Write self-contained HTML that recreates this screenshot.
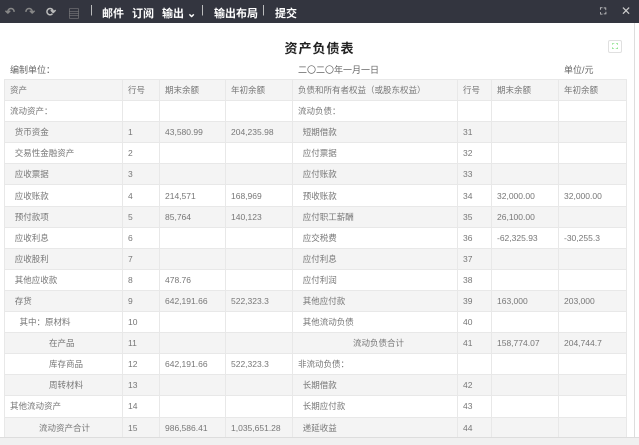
<!DOCTYPE html>
<html><head><meta charset="utf-8"><style>
*{margin:0;padding:0;box-sizing:border-box}
body{width:639px;height:445px;overflow:hidden;background:#fff;font-family:"Liberation Sans","Noto Sans CJK SC",sans-serif;color:#555;position:relative}
.tb{position:absolute;left:0;top:0;width:639px;height:23px;background:#33353f;color:#fff;font-size:11px;font-weight:bold}
.tb span{position:absolute;top:5px}
.tb .sep{color:#ccc;font-weight:normal;top:4px}
.ic{position:absolute;color:#888;font-size:12px;top:4px}
.title{position:absolute;top:38px;left:0;width:639px;text-align:center;font-size:13px;font-weight:bold;color:#222;letter-spacing:1px}
.meta{position:absolute;top:63px;font-size:9px;color:#666}
table{position:absolute;left:4px;top:79px;border-collapse:collapse;font-size:8.5px;table-layout:fixed}
td{height:21.1px;border:1px solid #e8e8e8;padding:0 5px;white-space:nowrap;overflow:hidden;color:#777}
tr.g td{background:#f4f4f4}
.r{position:absolute;left:634px;top:23px;width:1px;height:420px;background:#ddd}
.bot{position:absolute;left:0;top:437px;width:639px;height:8px;background:#f0f0f0;border-top:1px solid #ddd}
</style></head><body>
<div class="tb">
<span class="ic" style="left:5px">↶</span><span class="ic" style="left:25px">↷</span><span class="ic" style="left:46px;color:#bbb">⟳</span><span class="ic" style="left:68px">▤</span>
<span class="sep" style="left:90px">|</span>
<span style="left:102px">邮件</span><span style="left:132px">订阅</span><span style="left:162px">输出 ⌄</span>
<span class="sep" style="left:201px">|</span>
<span style="left:214px">输出布局</span>
<span class="sep" style="left:262px">|</span>
<span style="left:275px">提交</span>
<span style="left:600px;font-size:9px;color:#ccc;top:6px">⛶</span><span style="left:621px;font-weight:normal;color:#ccc;font-size:12px;top:4px">✕</span>
</div>
<div class="title">资产负债表</div>
<div style="position:absolute;left:608px;top:40px;width:14px;height:13px;border:1px solid #e0e0e0;border-radius:2px;color:#3c3;font-size:8px;text-align:center;line-height:11px">⛶</div>
<div class="meta" style="left:10px">编制单位：</div>
<div class="meta" style="left:298px">二〇二〇年一月一日</div>
<div class="meta" style="left:564px">单位/元</div>
<table>
<colgroup><col style="width:118px"><col style="width:37px"><col style="width:66px"><col style="width:67px"><col style="width:165px"><col style="width:34px"><col style="width:67px"><col style="width:68px"></colgroup>
<tr class="g"><td>资产</td><td>行号</td><td>期末余额</td><td>年初余额</td><td>负债和所有者权益（或股东权益）</td><td>行号</td><td>期末余额</td><td>年初余额</td></tr>
<tr><td>流动资产：</td><td></td><td></td><td></td><td>流动负债：</td><td></td><td></td><td></td></tr>
<tr class="g"><td>&nbsp;&nbsp;货币资金</td><td>1</td><td>43,580.99</td><td>204,235.98</td><td>&nbsp;&nbsp;短期借款</td><td>31</td><td></td><td></td></tr>
<tr><td>&nbsp;&nbsp;交易性金融资产</td><td>2</td><td></td><td></td><td>&nbsp;&nbsp;应付票据</td><td>32</td><td></td><td></td></tr>
<tr class="g"><td>&nbsp;&nbsp;应收票据</td><td>3</td><td></td><td></td><td>&nbsp;&nbsp;应付账款</td><td>33</td><td></td><td></td></tr>
<tr><td>&nbsp;&nbsp;应收账款</td><td>4</td><td>214,571</td><td>168,969</td><td>&nbsp;&nbsp;预收账款</td><td>34</td><td>32,000.00</td><td>32,000.00</td></tr>
<tr class="g"><td>&nbsp;&nbsp;预付款项</td><td>5</td><td>85,764</td><td>140,123</td><td>&nbsp;&nbsp;应付职工薪酬</td><td>35</td><td>26,100.00</td><td></td></tr>
<tr><td>&nbsp;&nbsp;应收利息</td><td>6</td><td></td><td></td><td>&nbsp;&nbsp;应交税费</td><td>36</td><td>-62,325.93</td><td>-30,255.3</td></tr>
<tr class="g"><td>&nbsp;&nbsp;应收股利</td><td>7</td><td></td><td></td><td>&nbsp;&nbsp;应付利息</td><td>37</td><td></td><td></td></tr>
<tr><td>&nbsp;&nbsp;其他应收款</td><td>8</td><td>478.76</td><td></td><td>&nbsp;&nbsp;应付利润</td><td>38</td><td></td><td></td></tr>
<tr class="g"><td>&nbsp;&nbsp;存货</td><td>9</td><td>642,191.66</td><td>522,323.3</td><td>&nbsp;&nbsp;其他应付款</td><td>39</td><td>163,000</td><td>203,000</td></tr>
<tr><td>&nbsp;&nbsp;&nbsp;&nbsp;其中：原材料</td><td>10</td><td></td><td></td><td>&nbsp;&nbsp;其他流动负债</td><td>40</td><td></td><td></td></tr>
<tr class="g"><td style="padding-left:44px">在产品</td><td>11</td><td></td><td></td><td style="padding-left:60px">流动负债合计</td><td>41</td><td>158,774.07</td><td>204,744.7</td></tr>
<tr><td style="padding-left:44px">库存商品</td><td>12</td><td>642,191.66</td><td>522,323.3</td><td>非流动负债：</td><td></td><td></td><td></td></tr>
<tr class="g"><td style="padding-left:44px">周转材料</td><td>13</td><td></td><td></td><td>&nbsp;&nbsp;长期借款</td><td>42</td><td></td><td></td></tr>
<tr><td>其他流动资产</td><td>14</td><td></td><td></td><td>&nbsp;&nbsp;长期应付款</td><td>43</td><td></td><td></td></tr>
<tr class="g"><td style="padding-left:34px">流动资产合计</td><td>15</td><td>986,586.41</td><td>1,035,651.28</td><td>&nbsp;&nbsp;递延收益</td><td>44</td><td></td><td></td></tr>
</table>
<div class="r"></div>
<div class="bot"></div>
</body></html>
